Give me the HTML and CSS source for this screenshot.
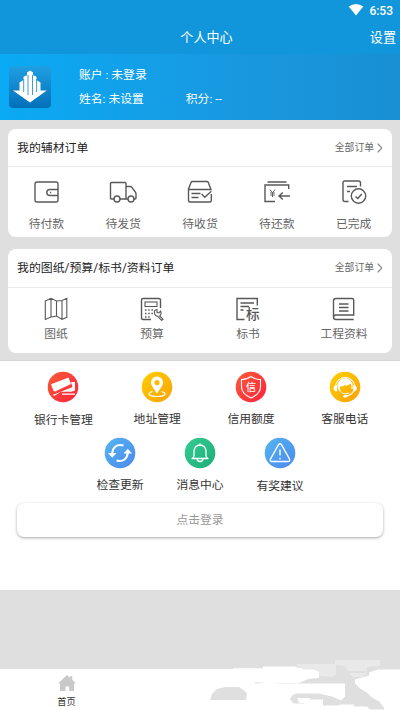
FILE: index.html
```html
<!DOCTYPE html>
<html lang="zh-CN">
<head>
<meta charset="utf-8">
<title>个人中心</title>
<link rel="stylesheet" href="styles.css">
</head>
<body>
<div class="app">
  <header class="topbar">
    <div class="status">
      <svg class="wifi" width="16" height="12" viewBox="0 0 16 12"><path d="M.7 2.6Q8-2.4 15.3 2.6L8 11.6z" fill="#fff"/></svg>
      <span>6:53</span>
    </div>
    <div class="titlebar"><h1>个人中心</h1><span class="settings">设置</span></div>
  </header>
  <section class="profile">
    <svg class="logo" width="42" height="42" viewBox="0 0 42 42">
      <defs><linearGradient id="lg" x2="0" y2="1"><stop offset="0" stop-color="#209fe2"/><stop offset="1" stop-color="#0370b9"/></linearGradient></defs>
      <rect width="42" height="42" rx="4" fill="url(#lg)"/>
      <path d="M10.500 24.500V16.500L14.500 14v-3.300L17 9.500h1V6.500L21 4.500l3 2V9.500h1l2.500 1.200V14l4 2.500v8h6.300L21 36.500 4 24.500z" fill="#fff"/>
      <path d="M14.700 13v13M19 9V29M23.500 9V29M27.600 13v13" stroke="#0d82cb" stroke-width=".8"/>
    </svg>
    <div class="account">
      <p>账户 : 未登录</p>
      <p class="pair"><span>姓名: 未设置</span><span>积分: --</span></p>
    </div>
  </section>

  <main class="orders">
    <section class="card first">
      <div class="card-head"><h2>我的辅材订单</h2><span class="all">全部订单<svg width="6" height="10" viewBox="0 0 6 10"><path d="M.7.700 4.700 5 .7 9.300"/></svg></span></div>
      <div class="grid five">
        <div class="entry">
          <svg width="28" height="28" viewBox="0 0 28 28"><rect x="3" y="4" width="23" height="20" rx="2"/><path d="M26 11.500h-8.200a3 3 0 0 0 0 6H26"/><path d="M18 14.500h1.200"/></svg>
          <span>待付款</span>
        </div>
        <div class="entry">
          <svg width="28" height="28" viewBox="0 0 28 28"><path d="M5 21H2.500q-1 0-1-1V5.500q0-1 1-1H16q1 0 1 1V21H11M17 8.500h4.200q1 0 1.600.8l3.500 4.700q.7 1 .7 2v4q0 1-1 1h-1.500M17 21h2"/><circle cx="8" cy="21" r="3"/><circle cx="22" cy="21" r="3"/></svg>
          <span>待发货</span>
        </div>
        <div class="entry">
          <svg width="28" height="28" viewBox="0 0 28 28"><path d="M25.300 16v6.500q0 1.500-1.500 1.500H4q-1.500 0-1.500-1.500V11L5 4.500q.4-1 1.400-1h14.500q1 0 1.400 1L25 11.500H2.500M5.500 15.500h9M5.500 19.500h7M15.500 16l3.300 3.300 6.500-6"/></svg>
          <span>待收货</span>
        </div>
        <div class="entry">
          <svg width="28" height="28" viewBox="0 0 28 28"><path d="M4.500 4h19M25.700 11V7H2v16.500h10M15.500 18H27M19.800 14.500 16 18l3.800 3.500"/><path class="fine" d="M7 11.500l2.500 3.500 2.500-3.500M9.500 15v4M7 15h5M7 17h5"/></svg>
          <span>待还款</span>
        </div>
        <div class="entry">
          <svg width="28" height="28" viewBox="0 0 28 28"><path d="M8.500 23.500H5Q3 23.500 3 21.500V5q0-2 2-2h13.500q2 0 2 2v3.500M7 8.500h10M7 13.500h3"/><circle cx="18.500" cy="18" r="7.200"/><path d="M15.500 18.500l2.300 2 4-4.500"/></svg>
          <span>已完成</span>
        </div>
      </div>
    </section>

    <section class="card second">
      <div class="card-head"><h2>我的图纸/预算/标书/资料订单</h2><span class="all">全部订单<svg width="6" height="10" viewBox="0 0 6 10"><path d="M.7.700 4.700 5 .7 9.300"/></svg></span></div>
      <div class="grid four">
        <div class="entry">
          <svg width="28" height="28" viewBox="0 0 28 28"><path class="mid" d="M3.300 6 9 3.300l5.500 2.700L20 5.500l4.800-2.200v19L20 24.500l-5.500-3.500L9 22l-5.700 2.500zM9 3.300V22M14.500 6v15M20 5.500v19"/></svg>
          <span>图纸</span>
        </div>
        <div class="entry">
          <svg width="28" height="28" viewBox="0 0 28 28"><path d="M13 24.500H5q-1.500 0-1.500-1.500V5Q3.500 3.500 5 3.500h16q1.500 0 1.500 1.500v8"/><rect class="mid" x="7" y="7" width="12" height="4.500"/><path class="dots" d="M7 15h8M7 18.500h8M7 22h6"/><path class="mid" d="M16.500 18q-.8-3 2.500-3.500v3l2 .5 1.500-2q1.500 3-.8 5l3.300 3.300-1.500 1-3.800-4q-2.800-.1-3.200-3.300z"/></svg>
          <span>预算</span>
        </div>
        <div class="entry">
          <svg width="28" height="28" viewBox="0 0 28 28"><path d="M10.500 24.500H3v-21h20.300v7M6.500 8H20M6.500 11.500H15M6.500 15h3"/><text x="12" y="23.500">标</text></svg>
          <span>标书</span>
        </div>
        <div class="entry">
          <svg width="28" height="28" viewBox="0 0 28 28"><path d="M23.700 24.500H6q-2.500 0-2.500-2.500V6Q3.500 3.500 6 3.500h16q1.700 0 1.700 1.700V20H6q-2.500 0-2.500 2.200M9 9h9.500M9 12.500h9.500M9 16h9.500"/></svg>
          <span>工程资料</span>
        </div>
      </div>
    </section>
  </main>

  <section class="services">
    <div class="row wide">
      <div class="service bank">
        <svg width="32" height="32" viewBox="0 0 32 32"><defs><linearGradient id="r" x1="0" y1="0" x2="1" y2="1"><stop stop-color="#fb5b37"/><stop offset="1" stop-color="#fb233e"/></linearGradient></defs><circle cx="16" cy="16" r="15.300" fill="url(#r)"/><path fill="#fff" d="M4 13.200 21.500 6.500 24 13 8 20.500 6.500 19.800zM24 11h4v8.500l-3.500 1.200H14L7 25l-1-1.200L25.500 16zM15 22.500h13v1.200H15z"/><path d="M7.500 22.500 25 15.500" stroke="#fb3a3b" stroke-width=".8"/></svg>
        <span>银行卡管理</span>
      </div>
      <div class="service">
        <svg width="32" height="32" viewBox="0 0 32 32"><defs><linearGradient id="y" x1="0" y1="0" x2="1" y2="1"><stop stop-color="#ffd000"/><stop offset="1" stop-color="#faa009"/></linearGradient></defs><circle cx="16" cy="16" r="15.300" fill="url(#y)"/><path fill="#fff" fill-rule="evenodd" d="M16 5.500a6 6 0 0 1 6 6c0 3-2.500 5.500-6 11-3.500-5.500-6-8-6-11a6 6 0 0 1 6-6zm0 3.500a2.600 2.600 0 1 0 0 5.200A2.600 2.600 0 0 0 16 9z"/><path d="M11.500 20.500c-7 2 -3 5 4.500 5s11.500-3 4.500-5" fill="none" stroke="#fff" stroke-width="1.200"/></svg>
        <span>地址管理</span>
      </div>
      <div class="service">
        <svg width="32" height="32" viewBox="0 0 32 32"><circle cx="16" cy="16" r="15.300" fill="url(#r)"/><path d="M16 5.500q4 3 9.500 3V16c0 5-4 8.500-9.500 11-5.500-2.500-9.500-6-9.500-11V8.500q5.500 0 9.500-3z" fill="none" stroke="#fff" stroke-width="1.100"/><text class="credit" x="11" y="19.500">信</text></svg>
        <span>信用额度</span>
      </div>
      <div class="service">
        <svg width="32" height="32" viewBox="0 0 32 32"><circle cx="16" cy="16" r="15.300" fill="url(#y)"/><path d="M6.500 14.500a9.700 9.300 0 0 1 19.200 0M24.800 19.500q-2 4.800-7.800 5.500" fill="none" stroke="#fff" stroke-width="1.100"/><path fill="#fff" d="M8.500 14.500a7.600 7.200 0 0 1 15.200 0v3.500h-1.200q.3-3.200-1-5.500-2.500 2.500-5.500 2.300l1-1.500q-2.500 2.300-6 2.200-.5 3.500 1.500 6.500Q8.500 19.500 8.500 14.500z"/><path fill="#fff" d="M8 14v6.500q-3.500-.5-3.500-3.300T8 14zM24.300 14v6.500q3.500-.5 3.500-3.300T24.300 14z"/><path d="M12.500 21.800q3.500 2.400 7.500 0" fill="none" stroke="#fff" stroke-width="1"/><rect x="14.300" y="24" width="4" height="2.400" rx="1.200" fill="#fff"/></svg>
        <span>客服电话</span>
      </div>
    </div>
    <div class="row narrow">
      <div class="service">
        <svg width="32" height="32" viewBox="0 0 32 32"><defs><linearGradient id="b" x1="0" y1="0" x2="1" y2="1"><stop stop-color="#54b5ef"/><stop offset="1" stop-color="#4b89ee"/></linearGradient></defs><circle cx="16" cy="16" r="15.300" fill="url(#b)"/><path d="M19.500 8.500C13 6.500 8.500 10.500 8.200 16.500M12.500 23.500c6.500 2 11-2 11.300-8" fill="none" stroke="#fff" stroke-width="2"/><path d="M4 16h8.500l-4.200 4.700zM19.500 16.500H28l-4.200-4.700z" fill="#fff"/></svg>
        <span>检查更新</span>
      </div>
      <div class="service">
        <svg width="32" height="32" viewBox="0 0 32 32"><defs><linearGradient id="g" x1="0" y1="0" x2="1" y2="1"><stop stop-color="#36cc93"/><stop offset="1" stop-color="#1dad78"/></linearGradient></defs><circle cx="16" cy="16" r="15.300" fill="url(#g)"/><path d="M8 21.500q2-1 2-3V14a6 6 0 0 1 12 0v4.500q0 2 2 3zM13 21.500a3 3 0 0 0 6 0M16 8V6.500" fill="none" stroke="#fff" stroke-width="1.300" stroke-linejoin="round"/></svg>
        <span>消息中心</span>
      </div>
      <div class="service advice">
        <svg width="32" height="32" viewBox="0 0 32 32"><circle cx="16" cy="16" r="15.300" fill="url(#b)"/><path d="M14.700 7.500q1.300-1.800 2.600 0L25.500 22q.8 2.500-1.500 2.500H8Q5.700 24.500 6.500 22zM16 12.500v6M16 20.700v1.500" fill="none" stroke="#fff" stroke-width="1.400"/></svg>
        <span>有奖建议</span>
      </div>
    </div>
    <button class="login">点击登录</button>
  </section>

  <nav class="tabs">
    <div class="tab">
      <svg width="18" height="16" viewBox="0 0 18 16"><path d="M9 0l3 2.700V1.300h2.300v3.500L18 8.500h-2V16h-4.800v-4.500H7.500V16H2V8.500H0z" fill="#c9c9c9"/></svg>
      <span>首页</span>
    </div>
    <svg class="patches" width="400" height="50" viewBox="0 660 400 50">
      <path fill="#fff" d="M200 669h33v-.8h30v-1.700h33l9 2.500h95v1H200z"/>
      <path fill="#dfdfdf" d="M296 666l9-1h95v4.500H378l-9 3v3l-14 4v4l5 5 7 4 5 5 7 4 5 6v2H370l-3-3H354v-2H341l-4 1h-14v-6h-15l-4 4h-10l-4-4 2-4 4-2h22l14 3 9 4 4-4v-13H255v-1h15l8-2h22l8-4 10-2 2-4-6-3h-17l-5-3z"/>
      <path fill="#e9e9e9" d="M296 664h39v-4h45v6l-13 1v6l-5 4h-9l-8-7h-9v7l-17-1-1-5-14-1-5-3z"/>
      <path fill="#dfdfdf" d="M336 665l8 1 4 5h20l-3 2H350v9H318l18-7z"/>
      <path fill="#fff" d="M300 669.500h14l5 2.500v6l-11 1-9 4h-20l-9 2h-15l20-6z"/>
      <path fill="#dfdfdf" d="M210 700l2-6 5-5 8-2h14l6 4 2 3-1 6z"/>
      <path fill="#fff" d="M297 698h13v5h-11z"/>
    </svg>
  </nav>
</div>
</body>
</html>
```
FILE: styles.css
```css
* { box-sizing: border-box; }
body {
  margin: 0;
  background: #dfdfdf;
  font-family: Roboto, "Noto Sans CJK SC", sans-serif;
  font-size: 11.8px;
  line-height: 16px;
  color: #333;
}
h1, h2, p { margin: 0; font-weight: 400; }
.app { width: 400px; height: 710px; display: flex; flex-direction: column; overflow: hidden; }
svg { display: block; flex: none; }

.topbar { height: 54px; background: #1296db; color: #fff; }
.status { height: 22px; padding: 0 7px 0 0; display: flex; justify-content: flex-end; align-items: center; gap: 5px; font-size: 12px; font-weight: 500; }
.wifi { margin-top: -2px; }
.titlebar { display: grid; grid-template-columns: 1fr auto 1fr; align-items: center; height: 31px; padding: 0 4px 0 17px; font-size: 13.1px; }
.titlebar h1 { grid-column: 2; font-size: 13.1px; }
.settings { justify-self: end; }

.profile { height: 66px; padding: 12px 0 0 8.5px; display: flex; gap: 28.5px; color: #fff; background: linear-gradient(90deg, #0aaaf4, #1998df 60%, #198fd4); }
.account { display: flex; flex-direction: column; gap: 8px; padding-top: 1px; }
.pair { display: flex; gap: 42px; }

.orders { height: 241px; padding: 9px 8px 0; border-bottom: 1px solid #d6d6d6; display: flex; flex-direction: column; gap: 12px; }
.card { background: #fff; border-radius: 8px; }
.first { height: 108px; }
.second { height: 104px; }
.card-head { height: 38px; padding: 0 9px; display: flex; align-items: center; justify-content: space-between; border-bottom: 1px solid #ebebeb; }
.second .card-head { height: 39px; }
.card-head h2 { font-size: 11.9px; color: #222; }
.all { display: flex; align-items: center; gap: 3px; font-size: 9.8px; color: #666; }
.all svg { fill: none; stroke: #777; stroke-width: 1.1; }
.grid { display: grid; }
.five { grid-template-columns: repeat(5, 1fr); padding-top: 11px; }
.four { grid-template-columns: repeat(4, 1fr); padding-top: 7px; }
.entry { display: flex; flex-direction: column; align-items: center; gap: 10px; color: #666; }
.four .entry { gap: 3px; }
.entry svg { fill: none; stroke: #595959; stroke-width: 1.4; }
.entry .mid { stroke-width: 1.1; }
.entry .fine { stroke-width: .9; }
.entry .dots { stroke-width: 1.5; stroke-dasharray: 1.5 1.7; }
.entry text { fill: #555; stroke: none; font-size: 13.5px; font-weight: 500; }

.services { height: 229px; padding-top: 10px; background: #fff; }
.row { display: flex; }
.service { display: flex; flex-direction: column; align-items: center; gap: 8px; }
.wide { height: 66px; padding: 0 8px 0 16.5px; }
.wide .service { width: 93.8px; }
.narrow { height: 66px; justify-content: center; }
.narrow .service { width: 80px; }
.service.bank, .service.advice { gap: 9px; }
.credit { fill: #fff; font-size: 10px; font-weight: 500; }
.login { display: block; width: 366px; height: 34px; margin: 0 17px; padding: 0; border: 0; border-radius: 7px; background: #fff; box-shadow: 0 1px 3px rgba(0, 0, 0, .35); color: #999; font: inherit; }

.tabs { position: relative; height: 41px; margin-top: 79px; background: #fff; }
.tab { width: 133px; padding-top: 6px; display: flex; flex-direction: column; align-items: center; gap: 3px; font-size: 9.2px; }
.patches { position: absolute; left: 0; bottom: 0; }
```
